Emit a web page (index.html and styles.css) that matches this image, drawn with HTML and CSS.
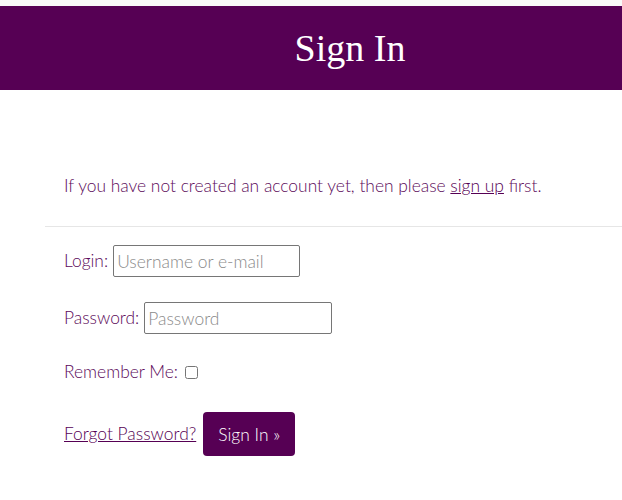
FILE: index.html
```html
<!DOCTYPE html>
<html>
<head>
<meta charset="utf-8">
<link rel="stylesheet" href="styles.css">
</head>
<body>
<div class="topstrip"></div>
<header class="banner"><h1 class="title">Sign In</h1></header>
<main class="content">
  <p class="intro">If you have not created an account yet, then please <a href="#">sign up</a> first.</p>
  <hr class="rule">
  <form class="form">
    <p class="row"><label>Login:</label> <input class="field login" type="text" placeholder="Username or e-mail"></p>
    <p class="row row-pass"><label>Password:</label> <input class="field pass" type="password" placeholder="Password"></p>
    <p class="row row-remember"><label>Remember Me:</label> <input class="check" type="checkbox"></p>
    <p class="row actions"><a href="#">Forgot Password?</a> <button class="btn" type="button">Sign In &raquo;</button></p>
  </form>
</main>
</body>
</html>
```
FILE: styles.css
```css
html, body {
  margin: 0;
  padding: 0;
  background: #ffffff;
  overflow: hidden;
}
body {
  font-family: Lato, "Open Sans", sans-serif;
  font-weight: 300;
  font-size: 17.4px;
  color: #5c0a5a;
}
.topstrip {
  height: 6px;
  background: #f9f9f9;
}
.banner {
  background: #560054;
  height: 84px;
  padding-left: 78px;
  display: flex;
  align-items: center;
  justify-content: center;
}
.title {
  margin: 0;
  font-family: "Liberation Serif", "DejaVu Serif", serif;
  font-weight: 400;
  font-size: 38px;
  color: #ffffff;
  line-height: 1;
}
.content {
  margin-left: 45px;
}
.intro {
  margin: 84px 0 0 19px;
  line-height: 24px;
}
.content a {
  color: #560054;
}
.rule {
  margin: 28px 0 0 0;
  border: 0;
  border-top: 1px solid #e6e6e6;
  height: 0;
}
.form {
  padding-left: 19px;
  padding-top: 18px;
}
.row {
  margin: 0 0 25px 0;
  line-height: 32px;
  display: flex;
  align-items: center;
  gap: 5px;
}
.row-pass {
  margin-bottom: 22px;
}
.row-remember {
  margin-bottom: 24px;
}
.field {
  box-sizing: border-box;
  height: 32px;
  border: 1px solid #767676;
  border-radius: 2px;
  font-family: Lato, sans-serif;
  font-weight: 300;
  font-size: 17.4px;
  padding: 0 3px;
  color: #333;
  margin: 0;
}
.field::placeholder {
  color: #8a8a8a;
}
.login { width: 187px; }
.pass { width: 188px; }
.check {
  width: 13px;
  height: 13px;
  margin: 0 0 0 2px;
}
.actions {
  margin-top: 0;
  gap: 7px;
}
.btn {
  background: #560054;
  color: #ffffff;
  border: 0;
  border-radius: 4px;
  width: 92px;
  height: 44px;
  font-family: Lato, sans-serif;
  font-weight: 300;
  font-size: 17.4px;
  padding: 0;
}
```
